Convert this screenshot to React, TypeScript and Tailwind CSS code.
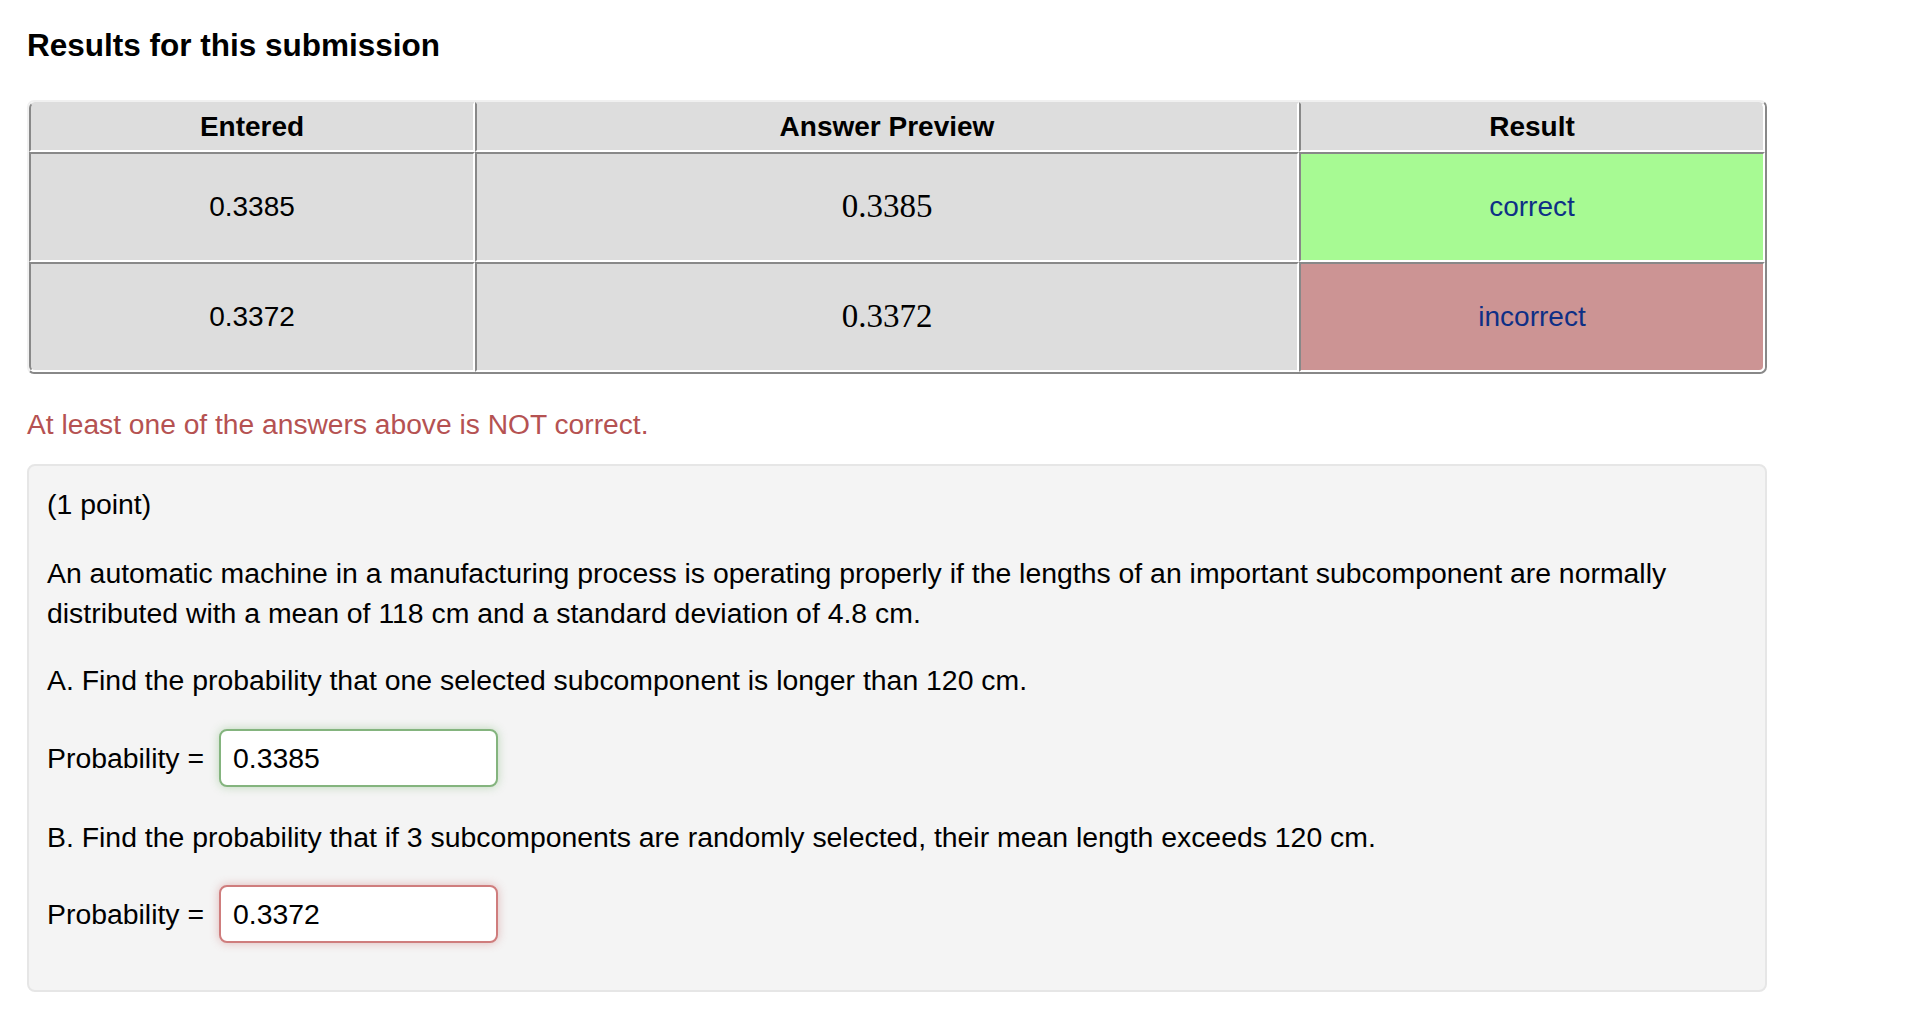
export default function App() {
  const rows = [
    { entered: '0.3385', preview: '0.3385', ok: true },
    { entered: '0.3372', preview: '0.3372', ok: false },
  ];

  return (
    <div className="min-h-screen bg-white pl-[27px] pt-[25px] text-black font-['Liberation_Sans',Arial,sans-serif]">
      <h2 className="text-[31.5px] leading-[40px] font-bold">Results for this submission</h2>

      <table className="mt-[35px] w-[1740px] table-fixed border-separate border-spacing-0 rounded-[7px] border-2 border-t-[#f0f0f0] border-l-[#f0f0f0] border-r-[#888] border-b-[#888] text-[28px]">
        <thead>
          <tr className="h-[50px]">
            <th className="w-[446px] rounded-tl-[6px] border-2 border-t-[#ddd] border-l-[#888] border-r-white border-b-white bg-[#ddd] font-bold">
              Entered
            </th>
            <th className="w-[824px] border-2 border-t-[#ddd] border-l-[#888] border-r-white border-b-white bg-[#ddd] font-bold">
              Answer Preview
            </th>
            <th className="w-[466px] rounded-tr-[6px] border-2 border-t-[#ddd] border-l-[#888] border-r-white border-b-white bg-[#ddd] font-bold">
              Result
            </th>
          </tr>
        </thead>
        <tbody>
          {rows.map((r, i) => (
            <tr key={i} className="h-[110px]">
              <td
                className={`border-2 border-t-[#888] border-l-[#888] border-r-white border-b-white bg-[#ddd] text-center ${
                  i === rows.length - 1 ? 'rounded-bl-[6px]' : ''
                }`}
              >
                {r.entered}
              </td>
              <td className="border-2 border-t-[#888] border-l-[#888] border-r-white border-b-white bg-[#ddd] text-center font-['Liberation_Serif','Times_New_Roman',serif] text-[33px]">
                {r.preview}
              </td>
              <td
                className={`border-2 border-t-[#888] border-l-[#888] border-r-white border-b-white text-center text-[#0e2f86] ${
                  r.ok ? 'bg-[#a7fa93]' : 'bg-[#cc9494]'
                } ${i === rows.length - 1 ? 'rounded-br-[6px]' : ''}`}
              >
                {r.ok ? 'correct' : 'incorrect'}
              </td>
            </tr>
          ))}
        </tbody>
      </table>

      <p className="mt-[30px] text-[28.2px] leading-[40px] text-[#b55252]">
        At least one of the answers above is NOT correct.
      </p>

      <div className="mt-[20px] w-[1740px] rounded-[8px] border-2 border-[#e6e6e6] bg-[#f4f4f4] pl-[18px] pr-[18px] pt-[18px] pb-[47px] text-[28.4px] leading-[40px]">
        <p>(1 point)</p>
        <p className="mt-[29px]">
          An automatic machine in a manufacturing process is operating properly if the lengths of an important
          subcomponent are normally distributed with a mean of 118 cm and a standard deviation of 4.8 cm.
        </p>
        <p className="mt-[27px]">A. Find the probability that one selected subcomponent is longer than 120 cm.</p>
        <div className="mt-[29px] flex items-center gap-[15px]">
          <span>Probability =</span>
          <div className="flex h-[58px] w-[279px] items-center rounded-[8px] border-2 border-[#84b47e] bg-white pl-[12px] shadow-[0_0_10px_rgba(120,180,110,0.45)]">
            0.3385
          </div>
        </div>
        <p className="mt-[30px]">
          B. Find the probability that if 3 subcomponents are randomly selected, their mean length exceeds 120 cm.
        </p>
        <div className="mt-[28px] flex items-center gap-[15px]">
          <span>Probability =</span>
          <div className="flex h-[58px] w-[279px] items-center rounded-[8px] border-2 border-[#cf7d7d] bg-white pl-[12px] shadow-[0_0_10px_rgba(200,110,110,0.45)]">
            0.3372
          </div>
        </div>
      </div>
    </div>
  );
}
